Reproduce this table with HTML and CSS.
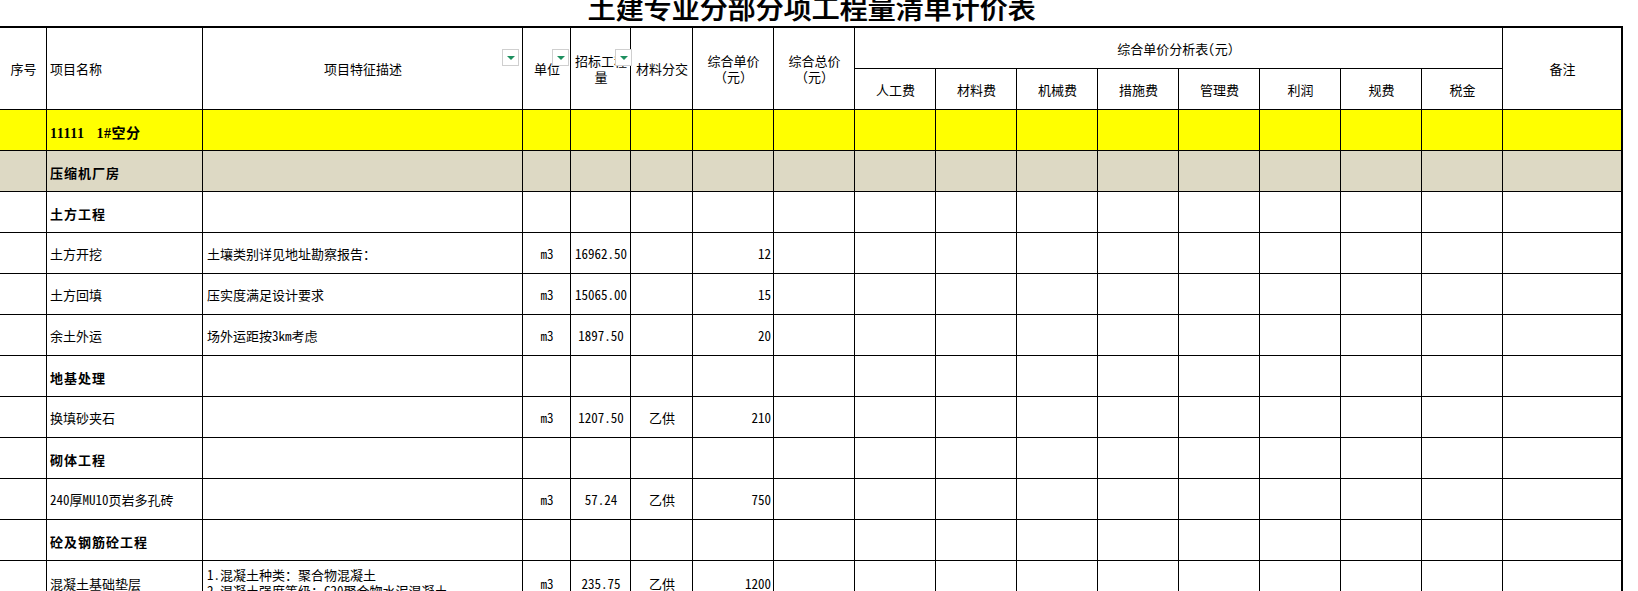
FILE: index.html
```html
<!DOCTYPE html>
<html lang="zh-CN">
<head>
<meta charset="utf-8">
<title>土建专业分部分项工程量清单计价表</title>
<link rel="stylesheet" href="styles.css">
</head>
<body>
<div class="sheet">
  <div class="title"><h1>土建专业分部分项工程量清单计价表</h1></div>
  <div class="table">
    <div class="head">
      <div class="c hs ctr">序号</div>
      <div class="c hs l">项目名称</div>
      <div class="c hs ctr">项目特征描述<span class="fbtn fb-a"></span></div>
      <div class="c hs ctr">单位<span class="fbtn fb-b"></span></div>
      <div class="c hs ctr wrap">招标工程量<span class="fbtn fb-c"></span></div>
      <div class="c hs ctr">材料分交</div>
      <div class="c hs ctr wrap">综合单价<br>（元）</div>
      <div class="c hs ctr wrap">综合总价<br>（元）</div>
      <div class="c ana ctr">综合单价分析表(元）</div>
      <div class="c sub ctr">人工费</div>
      <div class="c sub ctr">材料费</div>
      <div class="c sub ctr">机械费</div>
      <div class="c sub ctr">措施费</div>
      <div class="c sub ctr">管理费</div>
      <div class="c sub ctr">利润</div>
      <div class="c sub ctr">规费</div>
      <div class="c sub ctr">税金</div>
      <div class="c hs ctr">备注</div>
    </div>

    <div class="row yellow">
      <div class="c"></div><div class="c l code">11111   1#空分</div><div class="c"></div><div class="c"></div><div class="c"></div><div class="c"></div><div class="c"></div><div class="c"></div><div class="c"></div><div class="c"></div><div class="c"></div><div class="c"></div><div class="c"></div><div class="c"></div><div class="c"></div><div class="c"></div><div class="c"></div>
    </div>

    <div class="row tan">
      <div class="c"></div><div class="c l sec">压缩机厂房</div><div class="c"></div><div class="c"></div><div class="c"></div><div class="c"></div><div class="c"></div><div class="c"></div><div class="c"></div><div class="c"></div><div class="c"></div><div class="c"></div><div class="c"></div><div class="c"></div><div class="c"></div><div class="c"></div><div class="c"></div>
    </div>

    <div class="row">
      <div class="c"></div><div class="c l sec">土方工程</div><div class="c"></div><div class="c"></div><div class="c"></div><div class="c"></div><div class="c"></div><div class="c"></div><div class="c"></div><div class="c"></div><div class="c"></div><div class="c"></div><div class="c"></div><div class="c"></div><div class="c"></div><div class="c"></div><div class="c"></div>
    </div>

    <div class="row">
      <div class="c"></div><div class="c l">土方开挖</div><div class="c l d">土壤类别详见地址勘察报告：</div><div class="c ctr">m3</div><div class="c ctr">16962.50</div><div class="c ctr"></div><div class="c r">12</div><div class="c"></div><div class="c"></div><div class="c"></div><div class="c"></div><div class="c"></div><div class="c"></div><div class="c"></div><div class="c"></div><div class="c"></div><div class="c"></div>
    </div>

    <div class="row">
      <div class="c"></div><div class="c l">土方回填</div><div class="c l d">压实度满足设计要求</div><div class="c ctr">m3</div><div class="c ctr">15065.00</div><div class="c ctr"></div><div class="c r">15</div><div class="c"></div><div class="c"></div><div class="c"></div><div class="c"></div><div class="c"></div><div class="c"></div><div class="c"></div><div class="c"></div><div class="c"></div><div class="c"></div>
    </div>

    <div class="row">
      <div class="c"></div><div class="c l">余土外运</div><div class="c l d">场外运距按3km考虑</div><div class="c ctr">m3</div><div class="c ctr">1897.50</div><div class="c ctr"></div><div class="c r">20</div><div class="c"></div><div class="c"></div><div class="c"></div><div class="c"></div><div class="c"></div><div class="c"></div><div class="c"></div><div class="c"></div><div class="c"></div><div class="c"></div>
    </div>

    <div class="row">
      <div class="c"></div><div class="c l sec">地基处理</div><div class="c"></div><div class="c"></div><div class="c"></div><div class="c"></div><div class="c"></div><div class="c"></div><div class="c"></div><div class="c"></div><div class="c"></div><div class="c"></div><div class="c"></div><div class="c"></div><div class="c"></div><div class="c"></div><div class="c"></div>
    </div>

    <div class="row">
      <div class="c"></div><div class="c l">换填砂夹石</div><div class="c l d"></div><div class="c ctr">m3</div><div class="c ctr">1207.50</div><div class="c ctr">乙供</div><div class="c r">210</div><div class="c"></div><div class="c"></div><div class="c"></div><div class="c"></div><div class="c"></div><div class="c"></div><div class="c"></div><div class="c"></div><div class="c"></div><div class="c"></div>
    </div>

    <div class="row">
      <div class="c"></div><div class="c l sec">砌体工程</div><div class="c"></div><div class="c"></div><div class="c"></div><div class="c"></div><div class="c"></div><div class="c"></div><div class="c"></div><div class="c"></div><div class="c"></div><div class="c"></div><div class="c"></div><div class="c"></div><div class="c"></div><div class="c"></div><div class="c"></div>
    </div>

    <div class="row">
      <div class="c"></div><div class="c l">240厚MU10页岩多孔砖</div><div class="c l d"></div><div class="c ctr">m3</div><div class="c ctr">57.24</div><div class="c ctr">乙供</div><div class="c r">750</div><div class="c"></div><div class="c"></div><div class="c"></div><div class="c"></div><div class="c"></div><div class="c"></div><div class="c"></div><div class="c"></div><div class="c"></div><div class="c"></div>
    </div>

    <div class="row">
      <div class="c"></div><div class="c l sec">砼及钢筋砼工程</div><div class="c"></div><div class="c"></div><div class="c"></div><div class="c"></div><div class="c"></div><div class="c"></div><div class="c"></div><div class="c"></div><div class="c"></div><div class="c"></div><div class="c"></div><div class="c"></div><div class="c"></div><div class="c"></div><div class="c"></div>
    </div>

    <div class="row tall">
      <div class="c"></div><div class="c l">混凝土基础垫层</div><div class="c l d multi">1.混凝土种类：聚合物混凝土<br>2.混凝土强度等级：C20聚合物水泥混凝土</div><div class="c ctr">m3</div><div class="c ctr">235.75</div><div class="c ctr">乙供</div><div class="c r">1200</div><div class="c"></div><div class="c"></div><div class="c"></div><div class="c"></div><div class="c"></div><div class="c"></div><div class="c"></div><div class="c"></div><div class="c"></div><div class="c"></div>
    </div>
  </div>
</div>
</body>
</html>
```

FILE: styles.css
```css
html, body {
  margin: 0;
  padding: 0;
  background: #fff;
}

body {
  font-family: "Noto Sans Mono CJK SC", "Noto Sans CJK SC", sans-serif;
  font-size: 13px;
  color: #000;
  overflow: hidden;
}

.sheet {
  width: 1623px;
}

.title {
  height: 26px;
  display: flex;
  justify-content: center;
}

.title h1 {
  margin: -7px 0 0 0;
  font-family: "Noto Sans CJK SC", sans-serif;
  font-size: 28px;
  line-height: 28px;
  font-weight: 500;
  letter-spacing: 0;
  white-space: nowrap;
  text-shadow: 0.5px 0 0 #555;
}

.table {
  --cols: 46px 155px 319px 47px 59px 61px repeat(10, 80px) 118px;
  display: flex;
  flex-direction: column;
  gap: 1px;
  background: #000;
  border-top: 2px solid #000;
  border-right: 2px solid #000;
}

.head {
  display: grid;
  grid-template-columns: var(--cols);
  grid-template-rows: 40px 40px;
  gap: 1px;
}

.row {
  display: grid;
  grid-template-columns: var(--cols);
  grid-template-rows: 40px;
  gap: 1px;
}

.row.tall {
  grid-template-rows: 44px;
}

.c {
  background: #fff;
  display: flex;
  align-items: center;
  padding: 0 2px 0 3px;
  white-space: nowrap;
  position: relative;
  min-width: 0;
}

.yellow .c { background: #ffff00; }
.tan .c { background: #ddd9c4; }

.l { justify-content: flex-start; }
.ctr { justify-content: center; text-align: center; }
.r { justify-content: flex-end; }

.hs { grid-row: 1 / 3; }
.ana { grid-row: 1; grid-column: span 8; }
.sub { grid-row: 2; }

.wrap {
  white-space: normal;
  line-height: 16px;
}

.sec {
  font-family: "Noto Sans CJK SC", sans-serif;
  font-weight: 700;
  letter-spacing: 1px;
  padding-top: 2px;
}

.code {
  font-family: "Liberation Serif", "Noto Sans CJK SC", serif;
  font-weight: 700;
  font-size: 14px;
  letter-spacing: 0.5px;
  white-space: pre;
  padding-top: 3px;
}

.d { padding-left: 4px; }

.multi {
  white-space: nowrap;
  line-height: 16px;
  align-items: center;
  padding-top: 0;
}

.fbtn {
  position: absolute;
  top: 21px;
  width: 17px;
  height: 17px;
  box-sizing: border-box;
  border: 1px solid #cfcfcf;
  background: #fff;
  display: flex;
  align-items: center;
  justify-content: center;
  z-index: 1;
}

.fbtn::after {
  content: "";
  width: 0;
  height: 0;
  border-left: 4px solid transparent;
  border-right: 4px solid transparent;
  border-top: 4px solid #1d8f5e;
}

.fb-a { right: 3px; }
.fb-b { right: 1px; }
.fb-c { right: -2px; }
```
